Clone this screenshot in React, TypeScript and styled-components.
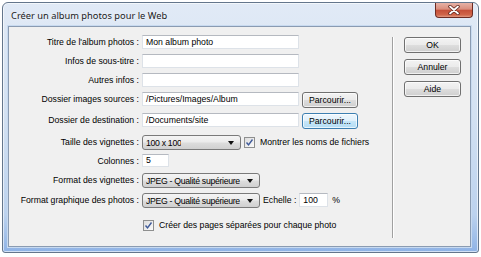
import { ReactNode } from 'react';
import styled, { createGlobalStyle } from 'styled-components';

const GlobalStyle = createGlobalStyle`
	html,
	body {
		margin: 0;
		padding: 0;
		background: #ffffff;
	}
	body {
		font-family: 'Liberation Sans', Arial, sans-serif;
	}
`;

const Window = styled.div`
	box-sizing: border-box;
	margin: 2px 0 0 2px;
	width: 477px;
	height: 251px;
	display: flex;
	flex-direction: column;
	border: 1px solid #64768c;
	border-radius: 6px 6px 3px 3px;
	background: linear-gradient(180deg, #e1eaf6 0%, #d3e1f2 45%, #bcd2ee 85%, #8fb3e6 100%);
	padding: 0 7px 5px 5px;
	box-shadow: inset 0 0 0 1px rgba(255, 255, 255, 0.6);
`;

const TitleBar = styled.div`
	height: 23px;
	display: flex;
	align-items: center;
	justify-content: space-between;
	padding-left: 3px;
`;

const TitleText = styled.span`
	font-family: 'Noto Sans', 'Liberation Sans', sans-serif;
	font-size: 9.3px;
	color: #1b1b1b;
	text-shadow: 0 0 4px rgba(255, 255, 255, 0.9);
	margin-top: 2px;
`;

const CloseButton = styled.div`
	align-self: flex-start;
	width: 38px;
	height: 15px;
	margin-right: -2px;
	box-sizing: border-box;
	border: 1px solid #6d2b22;
	border-top: none;
	border-radius: 0 0 4px 4px;
	background: linear-gradient(180deg, #e6b2a6 0%, #d98d7c 45%, #c44e38 50%, #d06549 85%, #e29a83 100%);
	display: flex;
	align-items: center;
	justify-content: center;
`;

const Client = styled.div`
	flex: 1;
	display: flex;
	background: #f0f0f0;
	border: 1px solid #8a9bb2;
	box-shadow: 0 0 0 1px #c8daf0;
`;

const Form = styled.div`
	width: 383px;
	display: grid;
	grid-template-columns: 130px auto;
	grid-template-rows: 19px 19px 19px 21px 22px 19px 19px 20px 25px auto;
	column-gap: 3px;
	padding-top: 8px;
	align-items: start;
`;

const Label = styled.div`
	font-size: 8.7px;
	line-height: 15px;
	color: #000;
	text-align: right;
	white-space: nowrap;
`;

const Field = styled.div`
	display: flex;
	align-items: flex-start;
	gap: 3px;
	font-size: 8.7px;
	color: #000;
`;

const TextBox = styled.div<{ $w: number; $h?: number }>`
	box-sizing: border-box;
	width: ${(p) => p.$w}px;
	height: ${(p) => p.$h ?? 14}px;
	background: #fff;
	border: 1px solid #dde2e8;
	border-top-color: #b5b9c0;
	font-size: 8.7px;
	line-height: ${(p) => (p.$h ?? 14) - 2}px;
	padding-left: 3px;
	white-space: nowrap;
	overflow: hidden;
`;

const Combo = styled.div<{ $w: number }>`
	box-sizing: border-box;
	width: ${(p) => p.$w}px;
	height: 15px;
	border: 1px solid #7a7a7a;
	border-radius: 3px;
	background: linear-gradient(180deg, #f4f4f4 0%, #ebebeb 48%, #dddddd 52%, #d0d0d0 100%);
	display: flex;
	align-items: center;
	justify-content: space-between;
	padding: 0 6px 0 3px;
	font-size: 8.7px;
	white-space: nowrap;
`;

const ComboText = styled.span`
	letter-spacing: -0.3px;
	overflow: hidden;
`;

const Arrow = styled.span`
	width: 0;
	height: 0;
	flex-shrink: 0;
	border-left: 3px solid transparent;
	border-right: 3px solid transparent;
	border-top: 4px solid #111;
	margin-top: 1px;
`;

const Button = styled.div<{ $w: number; $focused?: boolean }>`
	box-sizing: border-box;
	width: ${(p) => p.$w}px;
	height: 16px;
	border: 1px solid ${(p) => (p.$focused ? '#3c7fb1' : '#707070')};
	border-radius: 3px;
	background: ${(p) =>
		p.$focused
			? 'linear-gradient(180deg, #eef7fd 0%, #e0f0fb 48%, #c6e6f8 52%, #b3ddf5 100%)'
			: 'linear-gradient(180deg, #f3f3f3 0%, #ebebeb 48%, #dddddd 52%, #cfcfcf 100%)'};
	box-shadow: inset 0 0 0 1px rgba(255, 255, 255, 0.7);
	display: flex;
	align-items: center;
	justify-content: center;
	font-size: 8.7px;
	color: #000;
	white-space: nowrap;
`;

const Check = styled.div`
	box-sizing: border-box;
	width: 11px;
	height: 11px;
	border: 1px solid #8e8f8f;
	background: linear-gradient(135deg, #dcdcdc 0%, #fbfbfb 100%);
	display: flex;
	align-items: center;
	justify-content: center;
	flex-shrink: 0;
`;

const CheckRow = styled.div<{ $indent?: number }>`
	display: flex;
	align-items: center;
	gap: 5px;
	margin-left: ${(p) => p.$indent ?? 0}px;
	height: 14px;
	white-space: nowrap;
`;

const Plain = styled.span<{ $gap?: number }>`
	line-height: 15px;
	margin-left: ${(p) => p.$gap ?? 0}px;
	white-space: nowrap;
`;

const Separator = styled.div`
	width: 1px;
	margin-top: 10px;
	height: 201px;
	background: #a0a0a0;
	border-right: 1px solid #ffffff;
`;

const ButtonColumn = styled.div`
	display: flex;
	flex-direction: column;
	gap: 6px;
	padding: 10px 0 0 10px;
`;

function CheckBox({ children, indent }: { children: ReactNode; indent?: number }): JSX.Element {
	return (
		<CheckRow $indent={indent}>
			<Check>
				<svg width="9" height="9" viewBox="0 0 9 9">
					<path d="M1.5 4.5 L3.5 6.8 L7.5 1.5" fill="none" stroke="#3f5a99" strokeWidth="1.4" />
				</svg>
			</Check>
			<span>{children}</span>
		</CheckRow>
	);
}

function Select({ width, value }: { width: number; value: string }): JSX.Element {
	return (
		<Combo $w={width}>
			<ComboText>{value}</ComboText>
			<Arrow />
		</Combo>
	);
}

export default function App(): JSX.Element {
	return (
		<>
			<GlobalStyle />
			<Window>
				<TitleBar>
					<TitleText>Créer un album photos pour le Web</TitleText>
					<CloseButton>
						<svg width="12" height="10" viewBox="0 0 12 10">
							<path d="M2 1.5 L10 8.5 M10 1.5 L2 8.5" stroke="#5a2018" strokeWidth="3.4" strokeLinecap="round" />
							<path d="M2 1.5 L10 8.5 M10 1.5 L2 8.5" stroke="#ffffff" strokeWidth="1.8" strokeLinecap="round" />
						</svg>
					</CloseButton>
				</TitleBar>
				<Client>
					<Form>
						<Label>Titre de l'album photos :</Label>
						<Field>
							<TextBox $w={157}>Mon album photo</TextBox>
						</Field>

						<Label>Infos de sous-titre :</Label>
						<Field>
							<TextBox $w={157} />
						</Field>

						<Label>Autres infos :</Label>
						<Field>
							<TextBox $w={157} />
						</Field>

						<Label>Dossier images sources :</Label>
						<Field>
							<TextBox $w={157}>/Pictures/Images/Album</TextBox>
							<Button $w={56}>Parcourir...</Button>
						</Field>

						<Label>Dossier de destination :</Label>
						<Field>
							<TextBox $w={157}>/Documents/site</TextBox>
							<Button $w={56} $focused>
								Parcourir...
							</Button>
						</Field>

						<Label>Taille des vignettes :</Label>
						<Field>
							<Select width={99} value="100 x 100" />
							<CheckBox>Montrer les noms de fichiers</CheckBox>
						</Field>

						<Label>Colonnes :</Label>
						<Field>
							<TextBox $w={27} $h={13}>
								5
							</TextBox>
						</Field>

						<Label>Format des vignettes :</Label>
						<Field>
							<Select width={118} value="JPEG - Qualité supérieure" />
						</Field>

						<Label>Format graphique des photos :</Label>
						<Field>
							<Select width={118} value="JPEG - Qualité supérieure" />
							<Plain>Echelle :</Plain>
							<TextBox $w={29}>100</TextBox>
							<Plain $gap={1}>%</Plain>
						</Field>

						<div />
						<Field>
							<CheckBox indent={1}>Créer des pages séparées pour chaque photo</CheckBox>
						</Field>
					</Form>
					<Separator />
					<ButtonColumn>
						<Button $w={57}>OK</Button>
						<Button $w={57}>Annuler</Button>
						<Button $w={57}>Aide</Button>
					</ButtonColumn>
				</Client>
			</Window>
		</>
	);
}
